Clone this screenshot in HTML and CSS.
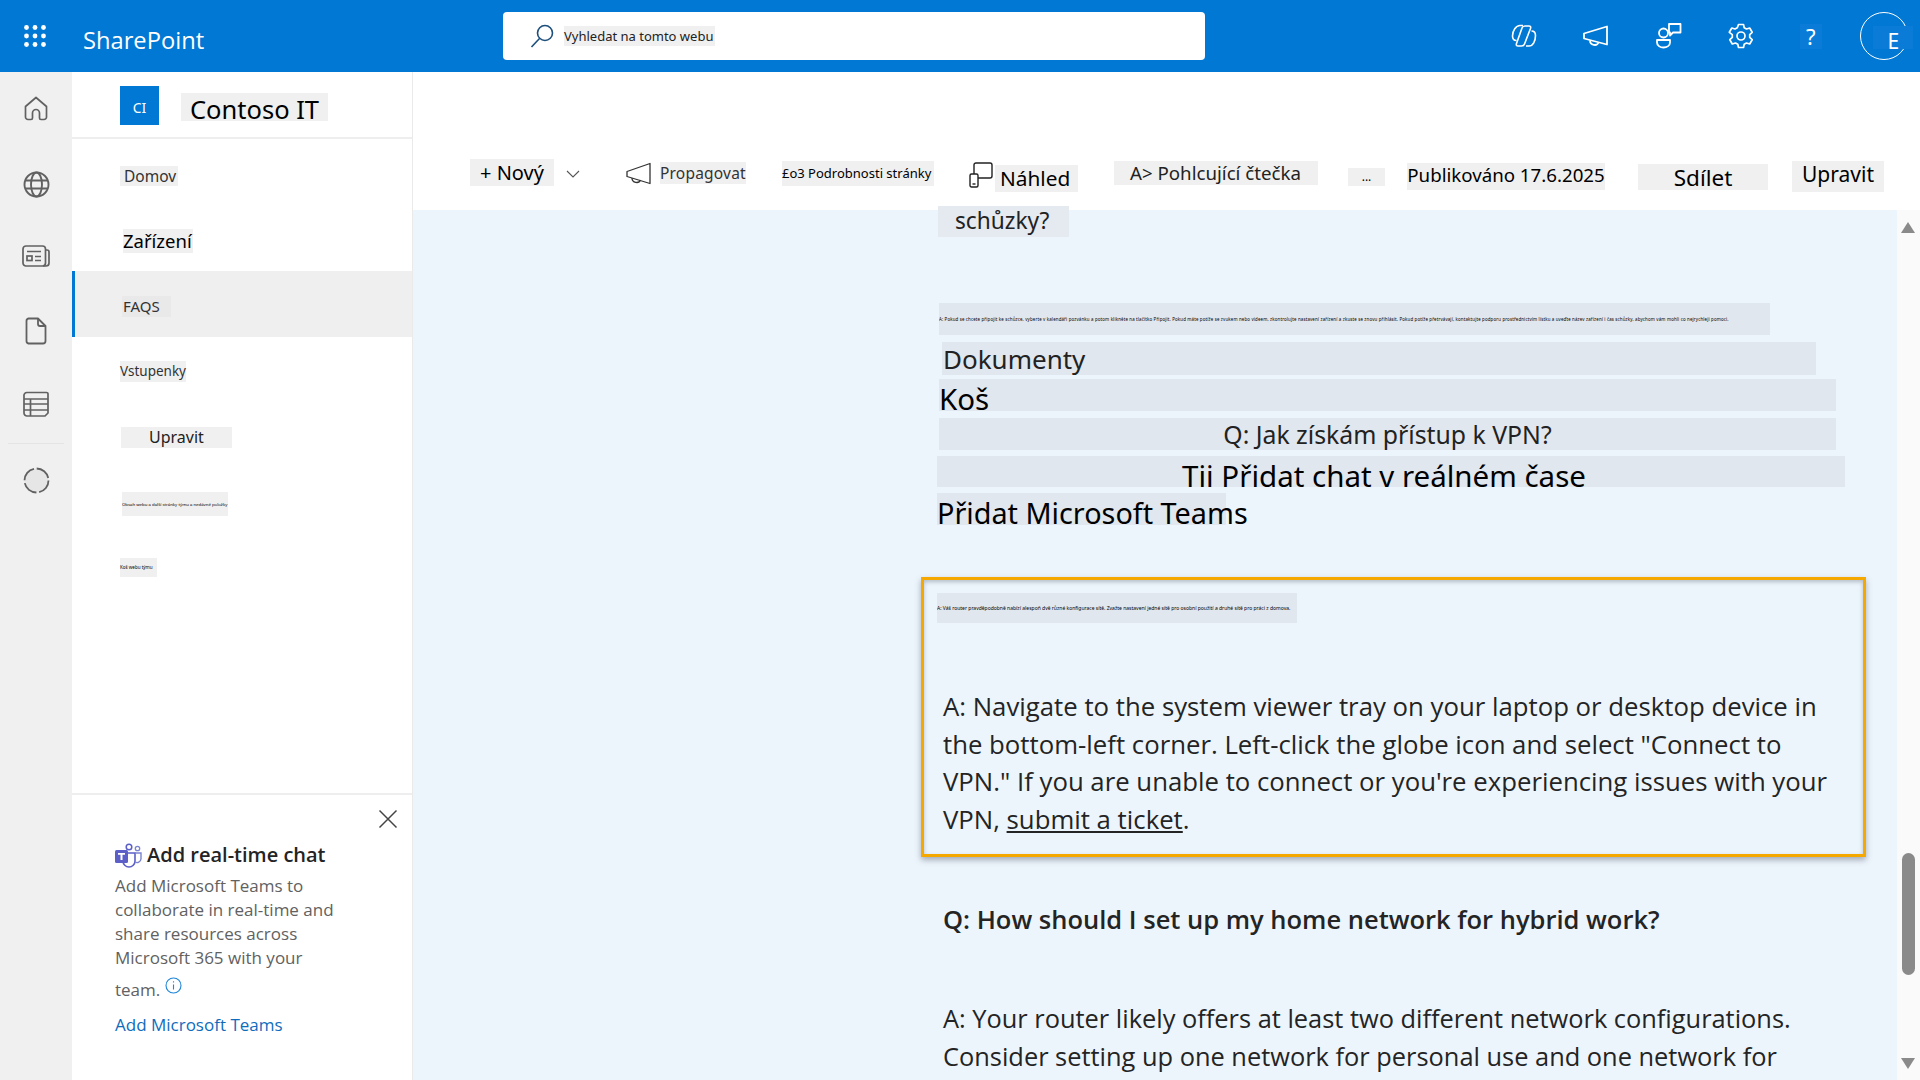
FILE: index.html
```html
<!DOCTYPE html>
<html lang="cs">
<head>
    <meta charset="UTF-8">
    <title>Contoso IT - FAQS</title>
    <link rel="stylesheet" href="styles.css">
</head>
<body>
<header class="topbar">
    <svg class="waffle" width="22" height="22" viewBox="0 0 22 22" fill="#fff">
        <circle cx="2.5" cy="2.5" r="2.4"/><circle cx="11" cy="2.5" r="2.4"/><circle cx="19.5" cy="2.5" r="2.4"/>
        <circle cx="2.5" cy="11" r="2.4"/><circle cx="11" cy="11" r="2.4"/><circle cx="19.5" cy="11" r="2.4"/>
        <circle cx="2.5" cy="19.5" r="2.4"/><circle cx="11" cy="19.5" r="2.4"/><circle cx="19.5" cy="19.5" r="2.4"/>
    </svg>
    <div class="brand">SharePoint</div>
    <div class="search">
        <svg width="26" height="26" viewBox="0 0 26 26" fill="none" stroke="#1d4f7c" stroke-width="1.6">
            <circle cx="16" cy="10" r="7.5"/><path d="M10.5 15.5 2.5 24"/>
        </svg>
        <span class="search-text">Vyhledat na tomto webu</span>
    </div>
    <div class="top-icons">
        <svg class="top-icon" width="26" height="26" viewBox="0 0 26 26" fill="none" stroke="#fff" stroke-width="1.6" stroke-linejoin="round">
            <path d="M14 3h4c1.5 0 2 1 1.5 2.5L13.5 21c-.5 1.5-1.5 2-3 2H7c-1.5 0-2-1-1.5-2.5L11 5c.5-1.5 1.5-2 3-2z"/>
            <path d="M12 2.5H9C5 2.5 1.5 7.5 1.5 13c0 3 1.5 4.5 4 4.5"/>
            <path d="M15 23h3c4 0 6.5-5 6.5-10.5 0-3-1.5-4.5-4-4.5"/>
        </svg>
        <svg class="top-icon" width="28" height="26" viewBox="0 0 28 26" fill="none" stroke="#fff" stroke-width="1.8" stroke-linejoin="round">
            <path d="M2 10.5 25 3.5v18L2 15.5z"/><path d="M8 17.5c0 5 7 6 8.5 2"/>
        </svg>
        <svg class="top-icon" width="28" height="28" viewBox="0 0 28 28" fill="none" stroke="#fff" stroke-width="1.8" stroke-linejoin="round">
            <circle cx="8.5" cy="11" r="4.5"/><path d="M2 18h13v2.5c0 3-3 5-6.500 5S2 23.500 2 20.500z"/>
            <path d="M14 2h11.500v8.500H18l-3 3v-3h-1z"/>
        </svg>
        <svg class="top-icon" width="26" height="26" viewBox="0 0 26 26" fill="none" stroke="#fff" stroke-width="1.7" stroke-linejoin="round">
            <circle cx="13" cy="13" r="4"/>
            <path d="M10.500 1.500h5l.7 3.300 2.300 1.200 3.200-1 2.500 4.300-2.500 2.300v2.800l2.500 2.300-2.500 4.300-3.200-1-2.300 1.200-.7 3.300h-5l-.7-3.300-2.300-1.200-3.200 1-2.500-4.300 2.500-2.300v-2.800L1.300 9.300l2.500-4.300 3.200 1 2.300-1.200z"/>
        </svg>
        <span class="help">?</span>
        <div class="avatar"><span class="avatar-letter">E</span></div>
    </div>
</header>

<div class="layout">
    <nav class="rail">
        <div class="rail-item">
            <svg class="rail-home" width="26" height="26" viewBox="0 0 26 26" fill="none" stroke="#616161" stroke-width="1.7" stroke-linejoin="round">
                <path d="M2.500 10.500 13 1.500l10.500 9V21a2.500 2.500 0 0 1-2.500 2.500h-3a1.500 1.500 0 0 1-1.500-1.500v-5a3.500 3.500 0 0 0-7 0v5A1.500 1.500 0 0 1 8 23.500H5A2.500 2.500 0 0 1 2.500 21z"/>
            </svg>
        </div>
        <div class="rail-item">
            <svg width="27" height="27" viewBox="0 0 27 27" fill="none" stroke="#616161" stroke-width="1.9">
                <circle cx="13.5" cy="13.5" r="12"/><ellipse cx="13.5" cy="13.5" rx="5.5" ry="12"/><path d="M2.500 9.500h22M2.500 17.500h22"/>
            </svg>
        </div>
        <div class="rail-item">
            <svg class="rail-news" width="28" height="24" viewBox="0 0 28 24" fill="none" stroke="#616161" stroke-width="1.7">
                <rect x="1" y="2" width="22.5" height="20" rx="3"/><path d="M23.500 6H25a2 2 0 0 1 2 2v11a3 3 0 0 1-3 3h-3"/>
                <path d="M5 7.500h14M13 12.500h6M13 16.500h6"/><rect x="5" y="12" width="5" height="4.5"/>
            </svg>
        </div>
        <div class="rail-item">
            <svg class="rail-doc" width="22" height="28" viewBox="0 0 22 28" fill="none" stroke="#616161" stroke-width="1.8" stroke-linejoin="round">
                <path d="M3.500 1.500h9.500l7.500 7.500v15a2.500 2.500 0 0 1-2.500 2.500H3.500A2.500 2.500 0 0 1 1.500 24V4a2.500 2.500 0 0 1 2-2.500z"/><path d="M13 1.500V7a2 2 0 0 0 2 2h5.500"/>
            </svg>
        </div>
        <div class="rail-item rail-item-last">
            <svg width="26" height="26" viewBox="0 0 26 26" fill="none" stroke="#616161" stroke-width="1.7" stroke-linejoin="round">
                <path d="M4 1.500h19.500a1.500 1.500 0 0 1 1.500 1.500v19l-3 3H4a3 3 0 0 1-3-3V5a3 3 0 0 1 3-3.500z"/>
                <path d="M1 8h24M1 13h24M1 19h24M7.500 8v17"/>
            </svg>
        </div>
        <div class="rail-divider"></div>
        <div class="rail-item">
            <svg class="rail-circle" width="27" height="27" viewBox="0 0 27 27">
                <circle cx="13.5" cy="13.5" r="12" fill="#e6e6e6" stroke="#616161" stroke-width="1.8" stroke-dasharray="16 2.8"/>
            </svg>
        </div>
    </nav>

    <aside class="sidenav">
        <div class="site">
            <div class="site-logo">CI</div>
            <div class="patch site-name">Contoso IT</div>
        </div>
        <div class="nav-list">
            <div class="nav-row"><span class="patch nav-domov">Domov</span></div>
            <div class="nav-row nav-row-short"><span class="patch nav-zarizeni">Zařízení</span></div>
            <div class="nav-row nav-row-active"><span class="patch nav-faqs">FAQS</span></div>
            <div class="nav-row"><span class="patch nav-vstupenky">Vstupenky</span></div>
            <div class="nav-row"><span class="patch nav-upravit">Upravit</span></div>
            <div class="nav-row"><span class="patch nav-tiny-long">Obsah webu a další stránky týmu a nedávné položky</span></div>
            <div class="nav-row nav-row-short"><span class="patch nav-tiny-short">Koš webu týmu</span></div>
        </div>
        <section class="teams-card">
            <svg class="teams-close" width="20" height="20" viewBox="0 0 20 20" stroke="#444" stroke-width="1.5"><path d="M1.500 1.500l17 17M18.500 1.500l-17 17"/></svg>
            <div class="teams-title">
                <svg width="27" height="25" viewBox="0 0 27 25">
                    <circle cx="14" cy="4" r="2.8" fill="none" stroke="#5b5fc7" stroke-width="1.5"/>
                    <circle cx="22.5" cy="5.5" r="2.2" fill="none" stroke="#7b83cf" stroke-width="1.3"/>
                    <path d="M8 10h12v8a6 6 0 0 1-12 0z" fill="none" stroke="#5b5fc7" stroke-width="1.6"/>
                    <path d="M20 10h6v6a4 4 0 0 1-6 3" fill="none" stroke="#7b83cf" stroke-width="1.4"/>
                    <rect x="0" y="7" width="13" height="13" rx="1.5" fill="#5b5fc7"/>
                    <path d="M3 10h7v1.800H7.500V17h-2v-5.200H3z" fill="#fff"/>
                </svg>
                <span>Add real-time chat</span>
            </div>
            <p class="teams-text">Add Microsoft Teams to collaborate in real-time and share resources across Microsoft 365 with your</p>
            <p class="teams-text teams-last">team.
                <svg class="teams-info" width="17" height="17" viewBox="0 0 17 17" fill="none" stroke="#1f86d8" stroke-width="1.1">
                    <circle cx="8.5" cy="8.5" r="7.5"/><path d="M8.500 7.500v5M8.500 4.300v1.200"/>
                </svg>
            </p>
            <a class="teams-link">Add Microsoft Teams</a>
        </section>
    </aside>

    <main class="main">
        <div class="toolbar">
            <span class="patch tb-new">+ Nový</span>
            <svg class="tb-chevron" width="14" height="8" viewBox="0 0 14 8" fill="none" stroke="#555" stroke-width="1.1"><path d="M1 1l6 6 6-6"/></svg>
            <svg class="tb-mega" width="26" height="24" viewBox="0 0 26 24" fill="none" stroke="#333" stroke-width="1.3" stroke-linejoin="round">
                <path d="M1 9.500 24 1.500v20L1 14.500z"/><path d="M6 16c0 5 7 6 8.500 2"/>
            </svg>
            <span class="patch tb-promote">Propagovat</span>
            <span class="patch tb-details">£o3 Podrobnosti stránky</span>
            <svg class="tb-preview" width="24" height="26" viewBox="0 0 24 26" fill="none" stroke="#222" stroke-width="1.4" stroke-linejoin="round">
                <rect x="5" y="1" width="18" height="15" rx="2"/><rect x="1" y="12" width="8" height="13" rx="1.5" fill="#fff"/><path d="M3.500 22h3"/>
            </svg>
            <span class="patch tb-view">Náhled</span>
            <span class="patch tb-reader">A&gt; Pohlcující čtečka</span>
            <span class="patch tb-more">...</span>
            <span class="patch tb-published">Publikováno 17.6.2025</span>
            <span class="patch tb-share">Sdílet</span>
            <span class="patch tb-edit">Upravit</span>
        </div>
        <div class="content-wrap">
            <div class="page">
                <div class="patch block block-meeting">schůzky?</div>
                <div class="patch block block-tiny">A: Pokud se chcete připojit ke schůzce, vyberte v kalendáři pozvánku a potom klikněte na tlačítko Připojit. Pokud máte potíže se zvukem nebo videem, zkontrolujte nastavení zařízení a zkuste se znovu přihlásit. Pokud potíže přetrvávají, kontaktujte podporu prostřednictvím lístku a uveďte název zařízení i čas schůzky, abychom vám mohli co nejrychleji pomoci.</div>
                <div class="patch block block-docs">Dokumenty</div>
                <div class="patch block block-bin">Koš</div>
                <div class="patch block block-vpn">Q: Jak získám přístup k VPN?</div>
                <div class="patch block block-chat">Tii Přidat chat v reálném čase</div>
                <div class="patch block block-add">Přidat Microsoft Teams</div>

                <div class="callout">
                    <div class="patch callout-tiny">A: Váš router pravděpodobně nabízí alespoň dvě různé konfigurace sítě. Zvažte nastavení jedné sítě pro osobní použití a druhé sítě pro práci z domova.</div>
                    <p class="answer">A: Navigate to the system viewer tray on your laptop or desktop device in the bottom-left corner. Left-click the globe icon and select "Connect to VPN." If you are unable to connect or you're experiencing issues with your VPN, <a class="answer-link">submit a ticket</a>.</p>
                </div>

                <h3 class="question">Q: How should I set up my home network for hybrid work?</h3>
                <p class="answer answer-last">A: Your router likely offers at least two different network configurations. Consider setting up one network for personal use and one network for</p>
            </div>
            <div class="scrollbar">
                <span class="arrow-up"></span>
                <span class="thumb"></span>
                <span class="arrow-down"></span>
            </div>
        </div>
    </main>
</div>
</body>
</html>
```

FILE: styles.css
```css
* {
    box-sizing: border-box;
}

body {
    margin: 0;
    height: 100vh;
    overflow: hidden;
    font-family: "Noto Sans", "Open Sans", sans-serif;
    background: #fff;
    color: #000;
}

p, h3 {
    margin: 0;
}

.patch {
    background: #f0f0f0;
}

/* top bar */
.topbar {
    display: flex;
    align-items: center;
    height: 72px;
    background: #0078d4;
    color: #fff;
}

.waffle {
    margin-left: 24px;
}

.brand {
    width: 121px;
    margin-left: 37px;
    margin-top: 8px;
    font-size: 23.7px;
    line-height: 28px;
    font-family: "Open Sans", sans-serif;
}

.search {
    display: flex;
    align-items: center;
    width: 702px;
    height: 48px;
    margin-left: 299px;
    padding-left: 26px;
    background: #fff;
    border-radius: 4px;
}

.search-text {
    margin-left: 9px;
    padding: 1px 2px 1px 0;
    font-size: 13px;
    background: #f0f0f0;
    color: #222;
}

.top-icons {
    display: flex;
    align-items: center;
    margin-left: 306px;
}

.top-icon {
    margin-right: 45px;
}

.help {
    margin-left: 1px;
    padding: 0 6px;
    font-size: 22px;
    line-height: 25px;
    background: #0a7cd8;
}

.avatar {
    position: relative;
    width: 48px;
    height: 48px;
    margin-left: 38px;
    border: 1px solid #fff;
    border-radius: 50%;
}

.avatar-letter {
    position: absolute;
    left: 12px;
    top: 13px;
    width: 40px;
    height: 23px;
    padding-left: 15px;
    font-size: 21px;
    line-height: 31px;
    background: #0a7cd8;
}

/* main layout */
.layout {
    display: flex;
    height: 1008px;
}

.rail {
    display: flex;
    flex-direction: column;
    align-items: center;
    width: 72px;
    padding-top: 1px;
    background: #f0f0f0;
}

.rail-item {
    display: flex;
    justify-content: center;
    align-items: center;
    height: 74px;
}

.rail-item-last {
    height: 70px;
    margin-bottom: 4px;
}

.rail-home, .rail-doc, .rail-circle {
    margin-top: -2px;
}

.rail-news {
    margin-top: -4px;
}

.rail-divider {
    width: 56px;
    height: 1px;
    background: #e4e4e4;
}

/* site nav */
.sidenav {
    display: flex;
    flex-direction: column;
    width: 341px;
    border-right: 1px solid #eaeaea;
    background: #fff;
}

.site {
    display: flex;
    align-items: center;
    height: 67px;
    padding-left: 48px;
    border-bottom: 2px solid #eee;
}

.site-logo {
    width: 39px;
    height: 39px;
    margin-top: 1px;
    font-size: 14px;
    line-height: 43px;
    text-align: center;
    color: #fff;
    background: #0078d4;
}

.site-name {
    width: 147px;
    height: 28px;
    margin-left: 22px;
    margin-top: 5px;
    padding-left: 9px;
    font-size: 25.5px;
    line-height: 32px;
}

.nav-list {
    display: flex;
    flex-direction: column;
    padding-top: 4px;
}

.nav-row {
    display: flex;
    align-items: center;
    height: 66px;
    padding-left: 48px;
}

.nav-row-short {
    height: 62px;
}

.nav-row-active {
    background: #efefef;
    border-left: 3px solid #0078d4;
    padding-left: 47px;
}

.nav-domov {
    padding: 0 2px 0 4px;
    font-size: 15.5px;
    line-height: 20px;
    color: #333;
}

.nav-zarizeni {
    margin-top: 2px;
    margin-left: 3px;
    font-size: 18.5px;
    line-height: 24px;
    padding-right: 1px;
}

.nav-faqs {
    margin-top: 4px;
    padding: 0 11px 0 1px;
    font-size: 15px;
    line-height: 21px;
    background: #e9e9e9;
    color: #333;
}

.nav-vstupenky {
    margin-top: 3px;
    font-size: 13.5px;
    line-height: 21px;
    color: #333;
}

.nav-upravit {
    width: 111px;
    margin-top: 3px;
    margin-left: 1px;
    padding-left: 28px;
    font-size: 16px;
    line-height: 21px;
    color: #222;
}

.nav-tiny-long {
    width: 106px;
    margin-top: 3px;
    margin-left: 2px;
    font-size: 4.3px;
    line-height: 24px;
    white-space: nowrap;
    overflow: hidden;
}

.nav-tiny-short {
    width: 37px;
    margin-top: 2px;
    font-size: 4.5px;
    line-height: 19px;
    white-space: nowrap;
    overflow: hidden;
}

/* teams card */
.teams-card {
    position: relative;
    margin-top: auto;
    height: 287px;
    padding: 47px 10px 0 43px;
    border-top: 2px solid #eee;
    font-family: "Open Sans", sans-serif;
}

.teams-close {
    position: absolute;
    top: 14px;
    right: 14px;
}

.teams-title {
    display: flex;
    align-items: center;
    gap: 5px;
    font-size: 20px;
    line-height: 26px;
    font-weight: 600;
    color: #242424;
}

.teams-text {
    width: 240px;
    margin-top: 6px;
    font-size: 17px;
    line-height: 24px;
    color: #616161;
}

.teams-last {
    margin-top: 7px;
}

.teams-info {
    margin-left: 0;
    vertical-align: 2px;
}

.teams-link {
    display: block;
    margin-top: 11px;
    font-size: 17px;
    line-height: 24px;
    color: #0f6cbd;
}

/* command bar */
.main {
    display: flex;
    flex-direction: column;
    flex: 1;
}

.toolbar {
    display: flex;
    align-items: flex-start;
    height: 138px;
    padding-top: 87px;
    white-space: nowrap;
}

.tb-new {
    width: 84px;
    height: 27px;
    margin-left: 57px;
    padding-left: 10px;
    font-size: 20px;
    line-height: 27px;
}

.tb-chevron {
    margin: 11px 0 0 12px;
}

.tb-mega {
    margin: 3px 0 0 46px;
}

.tb-promote {
    width: 86px;
    margin: 3px 0 0 8px;
    font-size: 15.5px;
    line-height: 22px;
    letter-spacing: 0.2px;
    color: #333;
}

.tb-details {
    width: 152px;
    margin: 2px 0 0 36px;
    font-size: 13px;
    line-height: 25px;
}

.tb-preview {
    margin: 3px 0 0 35px;
}

.tb-view {
    width: 83px;
    margin: 6px 0 0 2px;
    padding-left: 5px;
    font-size: 20.8px;
    line-height: 27px;
}

.tb-reader {
    width: 204px;
    margin: 2px 0 0 36px;
    padding-left: 16px;
    font-size: 18.7px;
    line-height: 24px;
    color: #222;
}

.tb-more {
    width: 37px;
    height: 18px;
    margin: 9px 0 0 30px;
    font-size: 12px;
    line-height: 18px;
    text-align: center;
}

.tb-published {
    width: 198px;
    height: 27px;
    margin: 4px 0 0 22px;
    font-size: 18.7px;
    line-height: 24px;
    text-align: center;
}

.tb-share {
    width: 130px;
    height: 26px;
    margin: 5px 0 0 33px;
    font-size: 22.5px;
    line-height: 28px;
    text-align: center;
}

.tb-edit {
    width: 92px;
    height: 31px;
    margin: 2px 0 0 24px;
    font-size: 21px;
    line-height: 27px;
    text-align: center;
}

/* page content */
.content-wrap {
    display: flex;
    flex: 1;
}

.page {
    flex: 1;
    padding-left: 508px;
    background: #edf5fc;
}

.block {
    height: 32px;
    background: #e1e7ee;
    line-height: 32px;
    white-space: nowrap;
}

.block-meeting {
    position: relative;
    width: 131px;
    height: 31px;
    margin: -4px 0 0 17px;
    padding-left: 17px;
    font-size: 22.7px;
    line-height: 29px;
    background: #e5e9f0;
    color: #222;
}

.block-tiny {
    width: 831px;
    margin: 66px 0 0 18px;
    font-size: 4.4px;
    letter-spacing: 0.15px;
    overflow: hidden;
}

.block-docs {
    width: 874px;
    height: 33px;
    margin: 7px 0 0 21px;
    padding-left: 1px;
    font-size: 26px;
    line-height: 35px;
    color: #222;
}

.block-bin {
    width: 897px;
    margin: 4px 0 0 18px;
    font-size: 29.5px;
    line-height: 39px;
}

.block-vpn {
    width: 897px;
    margin: 7px 0 0 18px;
    font-size: 24.8px;
    text-align: center;
    color: #222;
}

.block-chat {
    width: 908px;
    height: 31px;
    margin: 6px 0 0 16px;
    padding-right: 14px;
    font-size: 29.5px;
    line-height: 40px;
    text-align: center;
}

.block-add {
    width: 289px;
    margin: 6px 0 0 16px;
    font-size: 28.8px;
    line-height: 39px;
}

.callout {
    width: 945px;
    height: 280px;
    margin-top: 52px;
    padding: 13px 0 0 13px;
    border: 3px solid #f5a800;
    box-shadow: 0 3px 6px rgba(70, 80, 100, 0.45), inset 0 2px 4px rgba(70, 80, 100, 0.35);
}

.callout-tiny {
    width: 360px;
    height: 30px;
    font-size: 5px;
    line-height: 30px;
    white-space: nowrap;
    overflow: hidden;
    background: #e1e7ee;
}

.answer {
    width: 900px;
    margin-left: 6px;
    font-family: "Open Sans", sans-serif;
    font-size: 25.75px;
    line-height: 37.5px;
    color: #242424;
}

.callout .answer {
    margin-top: 65px;
}

.answer-link {
    color: #242424;
    text-decoration: underline;
}

.question {
    margin: 44px 0 0 22px;
    font-family: "Open Sans", sans-serif;
    font-size: 25.5px;
    line-height: 36px;
    font-weight: 600;
    color: #242424;
}

.answer-last {
    margin: 63px 0 0 22px;
    font-size: 25.4px;
}

/* scrollbar */
.scrollbar {
    position: relative;
    width: 23px;
    background: #fafafa;
}

.arrow-up, .arrow-down {
    position: absolute;
    left: 4px;
    border-left: 7.5px solid transparent;
    border-right: 7.5px solid transparent;
}

.arrow-up {
    top: 12px;
    border-bottom: 11px solid #8a8a8a;
}

.arrow-down {
    bottom: 11px;
    border-top: 11px solid #8a8a8a;
}

.thumb {
    position: absolute;
    left: 5px;
    top: 643px;
    width: 13px;
    height: 122px;
    background: #8a8a8a;
    border-radius: 7px;
}
```
